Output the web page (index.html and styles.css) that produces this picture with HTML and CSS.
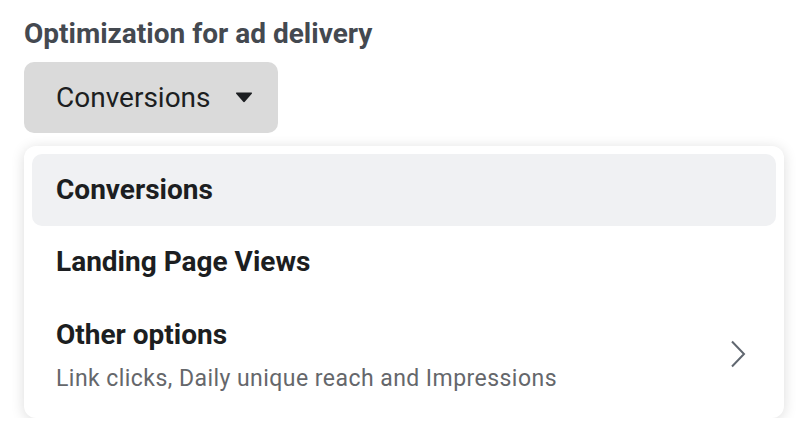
FILE: index.html
```html
<!DOCTYPE html>
<html lang="en">

<head>
    <meta charset="UTF-8">
    <title>Optimization for ad delivery</title>
    <link rel="stylesheet" href="styles.css">
</head>

<body>
    <div class="field">
        <div class="field-label">Optimization for ad delivery</div>
        <button class="select-btn" type="button">
            <span>Conversions</span>
            <svg class="caret" width="18" height="11" viewBox="0 0 18 11">
                <path d="M1.2 1.8 Q0.3 0.5 1.9 0.5 H16.1 Q17.7 0.5 16.8 1.8 L10 9.6 Q9 10.7 8 9.6 Z" fill="#1c1e21"/>
            </svg>
        </button>
        <div class="menu">
            <div class="menu-item active">
                <div class="item-title">Conversions</div>
            </div>
            <div class="menu-item">
                <div class="item-title">Landing Page Views</div>
            </div>
            <div class="menu-item tall">
                <div class="item-text">
                    <div class="item-title">Other options</div>
                    <div class="item-sub">Link clicks, Daily unique reach and Impressions</div>
                </div>
                <svg class="chevron" width="16" height="28" viewBox="0 0 16 28">
                    <path d="M2 1.5 L14 14 L2 26.5" fill="none" stroke="#606770" stroke-width="2"/>
                </svg>
            </div>
        </div>
    </div>
</body>

</html>
```

FILE: styles.css
```css
body {
    margin: 0;
    background: #ffffff;
    font-family: Roboto, "Liberation Sans", sans-serif;
    color: #1c1e21;
}

.field {
    padding: 17px 14px 0 24px;
}

.field-label {
    font-size: 28px;
    font-weight: 700;
    color: #444950;
    line-height: 34px;
}

.select-btn {
    display: flex;
    align-items: center;
    gap: 24px;
    height: 71px;
    margin-top: 11px;
    padding: 0 25px 0 32px;
    border: none;
    border-radius: 10px;
    background: #dadada;
    font-family: inherit;
    font-size: 28px;
    color: #1c1e21;
}

.caret {
    display: block;
}

.menu {
    margin-top: 13px;
    padding: 8px;
    background: #ffffff;
    border-radius: 12px;
    box-shadow: 0 2px 14px rgba(0, 0, 0, 0.14);
}

.menu-item {
    display: flex;
    align-items: center;
    height: 72px;
    padding: 0 24px;
    border-radius: 10px;
}

.menu-item.active {
    background: #f0f1f3;
}

.menu-item.tall {
    height: 112px;
    justify-content: space-between;
}

.item-title {
    font-size: 28px;
    line-height: 32px;
    font-weight: 700;
    color: #1c1e21;
}

.item-sub {
    margin-top: 14px;
    font-size: 23px;
    line-height: 28px;
    letter-spacing: 0.45px;
    color: #65676b;
}

.item-text {
    padding-top: 3px;
}

.chevron {
    margin-right: 6px;
}
```
